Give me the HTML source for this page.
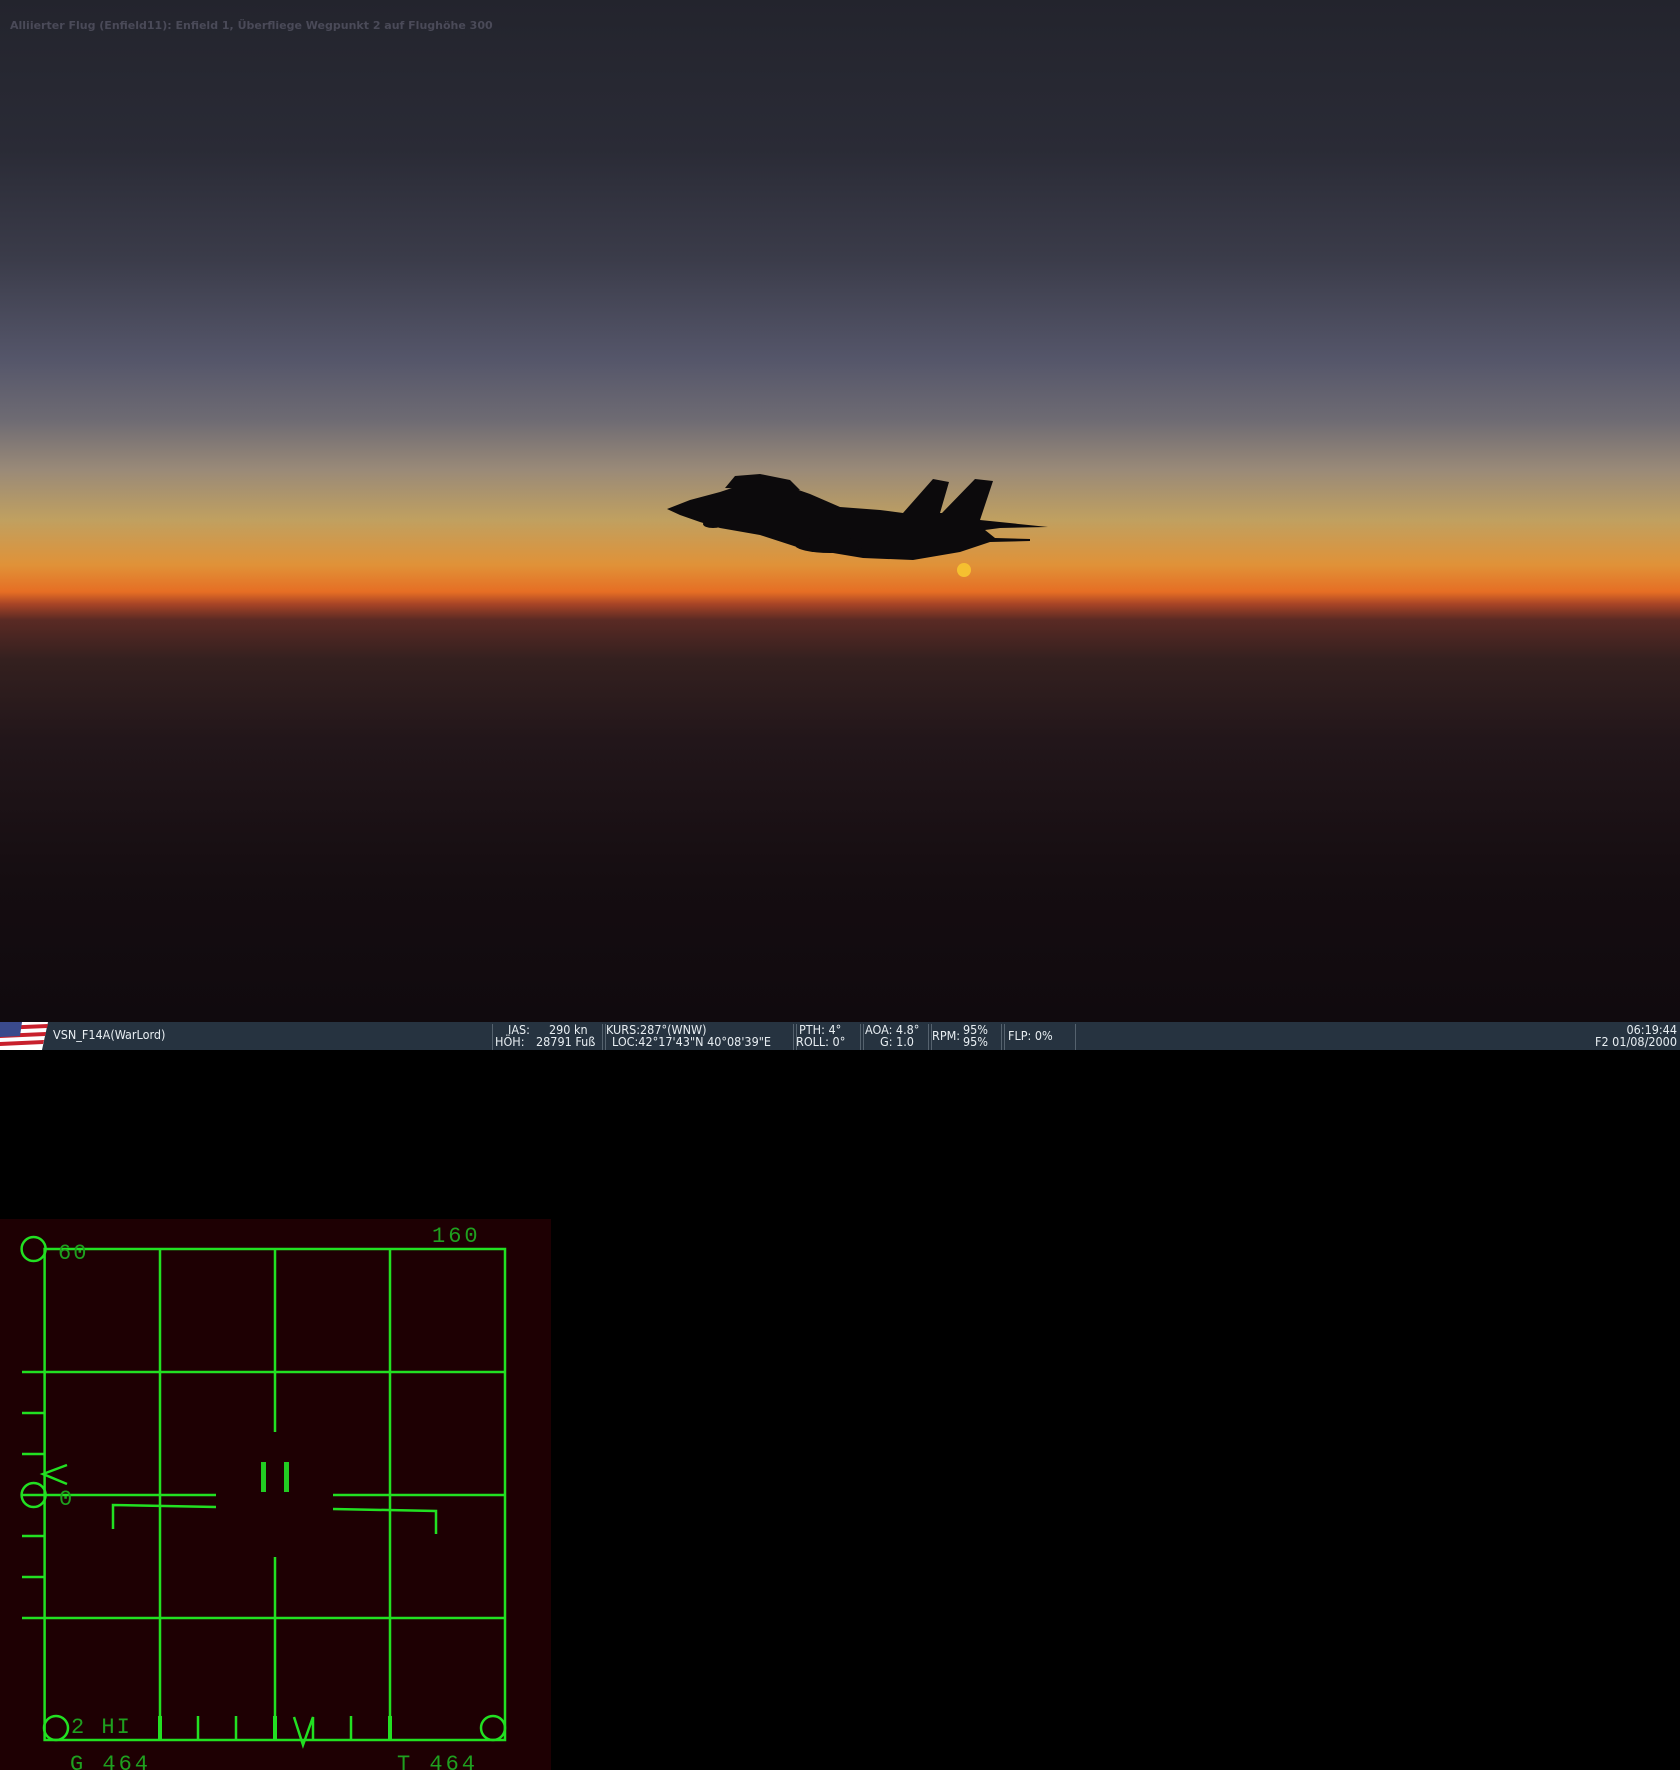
<!DOCTYPE html>
<html><head><meta charset="utf-8"><style>
html,body{margin:0;padding:0;background:#000;width:1680px;height:1770px;overflow:hidden}
#sky{position:absolute;left:0;top:0;width:1680px;height:1022px;
background:linear-gradient(to bottom,#23242d 0px,#2a2b36 150px,#3b3c4a 260px,#55566a 360px,#6e6b73 420px,#9a8a78 470px,#c0a060 520px,#e09238 565px,#e66e24 592px,#a84426 604px,#5a2a24 620px,#34201f 660px,#22161a 740px,#150d11 880px,#100a0e 1022px);}
#bar{position:absolute;left:0;top:1022px;width:1680px;height:28px;background:#263340;color:#e8eef2;font:12.5px "DejaVu Sans Condensed","Liberation Sans",sans-serif}
.t{position:absolute;line-height:13px;white-space:nowrap}
.sep{position:absolute;top:2px;height:26px;border-left:1px solid #55626e}
#msg{position:absolute;left:10px;top:19px;font:bold 11px "DejaVu Sans","Liberation Sans",sans-serif;color:#4a4a58}
#radar{position:absolute;left:0;top:1219px;width:551px;height:551px;background:#1e0003}
</style></head><body>
<div id="sky"></div>
<div id="msg">Alliierter Flug (Enfield11): Enfield 1, Überfliege Wegpunkt 2 auf Flughöhe 300</div>
<svg style="position:absolute;left:0;top:0" width="1680" height="1022">
<circle cx="964" cy="570" r="7" fill="#f5c030"/>
<g fill="#0c0a0c">
<polygon points="667,509 690,500 720,492 735,487 745,484 760,482 790,487 810,494 840,507 880,510 903,513 933,479 949,482 940,513 942,513 975,479 993,481 980,520 1048,527 1000,528 985,530 995,538 1030,539 1030,541 990,542 960,552 913,560 863,558 797,547 760,535 720,528 700,522 680,515"/>
<path d="M725,488 L735,476 L760,474 L790,480 L800,490 Z"/>
<ellipse cx="713" cy="524" rx="10" ry="4"/>
<ellipse cx="830" cy="545" rx="35" ry="8"/>
</g>
</svg>
<div id="bar">
<svg style="position:absolute;left:0;top:0" width="50" height="28"><rect width="50" height="28" fill="#263340"/><g fill="#fff"><polygon points="0,0 48,0 42,28 0,28"/></g><g fill="#c8202c"><polygon points="0,4 48,2 47,6 0,8"/><polygon points="0,12 46,10 45,14 0,16"/><polygon points="0,20 44,18 43,22 0,24"/></g><polygon points="0,0 22,0 20,14 0,15" fill="#3a4a8c"/></svg>
<div class="t" style="left:53px;top:6px">VSN_F14A(WarLord)</div>
<div class="sep" style="left:492px"></div>
<div class="t" style="left:508px;top:1px">IAS:</div><div class="t" style="left:495px;top:13px">HÖH:</div>
<div class="t" style="left:549px;top:1px">290 kn</div><div class="t" style="left:536px;top:13px">28791 Fuß</div>
<div class="sep" style="left:602px"></div><div class="sep" style="left:605px"></div>
<div class="t" style="left:606px;top:1px">KURS:287°(WNW)</div><div class="t" style="left:612px;top:13px">LOC:42°17'43"N 40°08'39"E</div>
<div class="sep" style="left:793px"></div><div class="sep" style="left:796px"></div>
<div class="t" style="left:799px;top:1px">PTH: 4°</div><div class="t" style="left:796px;top:13px">ROLL: 0°</div>
<div class="sep" style="left:860px"></div><div class="sep" style="left:863px"></div>
<div class="t" style="left:865px;top:1px">AOA: 4.8°</div><div class="t" style="left:880px;top:13px">G: 1.0</div>
<div class="sep" style="left:928px"></div><div class="sep" style="left:931px"></div>
<div class="t" style="left:932px;top:7px">RPM:</div><div class="t" style="left:963px;top:1px">95%</div><div class="t" style="left:963px;top:13px">95%</div>
<div class="sep" style="left:1001px"></div><div class="sep" style="left:1004px"></div>
<div class="t" style="left:1008px;top:7px">FLP: 0%</div>
<div class="sep" style="left:1075px"></div>
<div class="t" style="right:3px;top:1px;text-align:right">06:19:44</div><div class="t" style="right:3px;top:13px">F2 01/08/2000</div>
</div>
<div id="radar"></div>
<svg style="position:absolute;left:0;top:1219px" width="551" height="551" viewBox="0 1219 551 551">
<g stroke="#22e022" stroke-width="2.5" fill="none">
<rect x="44.6" y="1249" width="460.4" height="491"/>
<line x1="160" y1="1249" x2="160" y2="1740"/><line x1="390" y1="1249" x2="390" y2="1740"/>
<line x1="275" y1="1249" x2="275" y2="1432"/><line x1="275" y1="1557" x2="275" y2="1740"/>
<line x1="22" y1="1372" x2="505" y2="1372"/><line x1="22" y1="1618" x2="505" y2="1618"/>
<line x1="22" y1="1495" x2="216" y2="1495"/><line x1="333" y1="1495" x2="505" y2="1495"/>
<line x1="22" y1="1413" x2="45" y2="1413"/><line x1="22" y1="1454" x2="45" y2="1454"/>
<line x1="22" y1="1536" x2="45" y2="1536"/><line x1="22" y1="1577" x2="45" y2="1577"/>
<circle cx="33.6" cy="1249" r="12"/><circle cx="33.6" cy="1495" r="12"/>
<circle cx="56" cy="1728" r="12"/><circle cx="493" cy="1728" r="12"/>
<polyline points="67,1465 43,1474 67,1484"/>
<polyline points="113,1529 113,1505 216,1507"/>
<polyline points="333,1509 436,1511 436,1534"/>
<line x1="160" y1="1716" x2="160" y2="1740" stroke-width="4"/><line x1="198" y1="1716" x2="198" y2="1740"/><line x1="236" y1="1716" x2="236" y2="1740"/>
<line x1="275" y1="1716" x2="275" y2="1740" stroke-width="4"/><line x1="351" y1="1716" x2="351" y2="1740"/><line x1="390" y1="1716" x2="390" y2="1740" stroke-width="4"/>
<polyline points="294,1717 303,1745 313,1717 313,1741"/>
</g>
<rect x="261" y="1462" width="5" height="30" fill="#22cc22"/><rect x="284" y="1462" width="5" height="30" fill="#22cc22"/>
<g fill="#1fa01f" font-family="Liberation Mono,monospace" font-size="22">
<text x="432" y="1242" letter-spacing="3">160</text>
<text x="58" y="1259" letter-spacing="2">60</text>
<text x="59" y="1505">0</text>
<text x="71" y="1733" letter-spacing="2">2 HI</text>
<text x="70" y="1770" letter-spacing="3">G 464</text>
<text x="397" y="1770" letter-spacing="3">T 464</text>
</g>
</svg>
</body></html>
